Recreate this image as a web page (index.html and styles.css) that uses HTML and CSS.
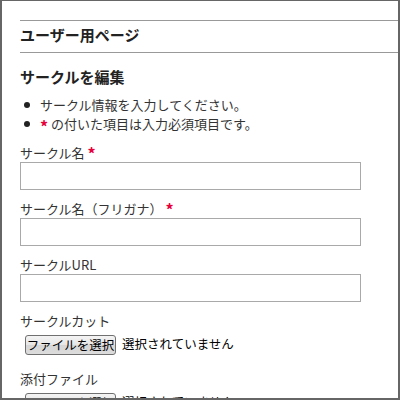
FILE: index.html
```html
<!DOCTYPE html>
<html lang="ja">
<head>
<meta charset="utf-8">
<title>サークルを編集</title>
<link rel="stylesheet" href="styles.css">
</head>
<body>
<div class="frame">
  <div class="page">
    <h1 class="page-title">ユーザー用ページ</h1>
    <h2 class="section-title">サークルを編集</h2>
    <ul class="notes">
      <li>サークル情報を入力してください。</li>
      <li><span class="req">*</span>&nbsp;の付いた項目は入力必須項目です。</li>
    </ul>
    <div class="field">
      <label class="label">サークル名 <span class="req">*</span></label>
      <input class="text" type="text">
    </div>
    <div class="field">
      <label class="label">サークル名（フリガナ） <span class="req">*</span></label>
      <input class="text" type="text">
    </div>
    <div class="field">
      <label class="label">サークルURL</label>
      <input class="text" type="text">
    </div>
    <div class="field">
      <label class="label">サークルカット</label>
      <div class="file-row">
        <button class="file-btn" type="button">ファイルを選択</button>
        <span class="file-status">選択されていません</span>
      </div>
    </div>
    <div class="field">
      <label class="label">添付ファイル</label>
      <div class="file-row">
        <button class="file-btn" type="button">ファイルを選択</button>
        <span class="file-status">選択されていません</span>
      </div>
    </div>
  </div>
</div>
</body>
</html>
```

FILE: styles.css
```css
* { box-sizing: border-box; }
html, body {
  margin: 0;
  padding: 0;
  background: #fff;
}
body {
  font-family: "Noto Sans CJK JP", "Noto Sans", sans-serif;
  color: #333;
  font-size: 13px;
}
.frame {
  width: 400px;
  height: 400px;
  border-top: 1px solid #666;
  border-left: 2px solid #666;
  border-right: 2px solid #666;
  border-bottom: 2px solid #666;
  overflow: hidden;
}
.page {
  padding: 19px 0 0 18px;
}
.page-title {
  margin: 0;
  height: 33px;
  line-height: 28px;
  padding-bottom: 3px;
  font-size: 15px;
  font-weight: 700;
  color: #222;
  border-top: 1px solid #999;
  border-bottom: 1px solid #999;
}
.section-title {
  margin: 13px 0 0;
  line-height: 22px;
  font-size: 15px;
  font-weight: 700;
  color: #222;
}
.notes {
  list-style: none;
  margin: 7px 0 0;
  padding: 0;
}
.notes li {
  display: flex;
  align-items: center;
  line-height: 19px;
}
.notes li::before {
  content: "";
  width: 6px;
  height: 6px;
  border-radius: 50%;
  background: #222;
  margin: 0 10px 0 4px;
  flex: none;
}
.req {
  color: #e8003a;
  font-weight: 700;
  font-size: 16px;
  line-height: 1;
  position: relative;
  top: 2px;
}
.field {
  margin-top: 10px;
  display: flex;
  flex-direction: column;
  align-items: flex-start;
}
.field + .field { margin-top: 9px; }
.label {
  line-height: 19px;
  height: 19px;
  color: #333;
}
.text {
  width: 341px;
  height: 28px;
  margin: 0;
  border: 1px solid #a9a9a9;
  background: #fff;
  font: inherit;
}
.file-row {
  height: 30px;
  display: flex;
  align-items: flex-start;
  padding: 5px 0 0 5px;
}
.file-btn {
  width: 91px;
  height: 20px;
  margin: 0;
  padding: 0;
  border: 1px solid #707070;
  border-radius: 3px;
  background: linear-gradient(#f4f4f4, #e6e6e6 50%, #d6d6d6 51%, #dcdcdc);
  font-family: inherit;
  font-size: 12.5px;
  color: #000;
  line-height: 18px;
}
.file-status {
  margin-left: 6px;
  font-size: 12.5px;
  line-height: 18px;
  color: #000;
}
```
